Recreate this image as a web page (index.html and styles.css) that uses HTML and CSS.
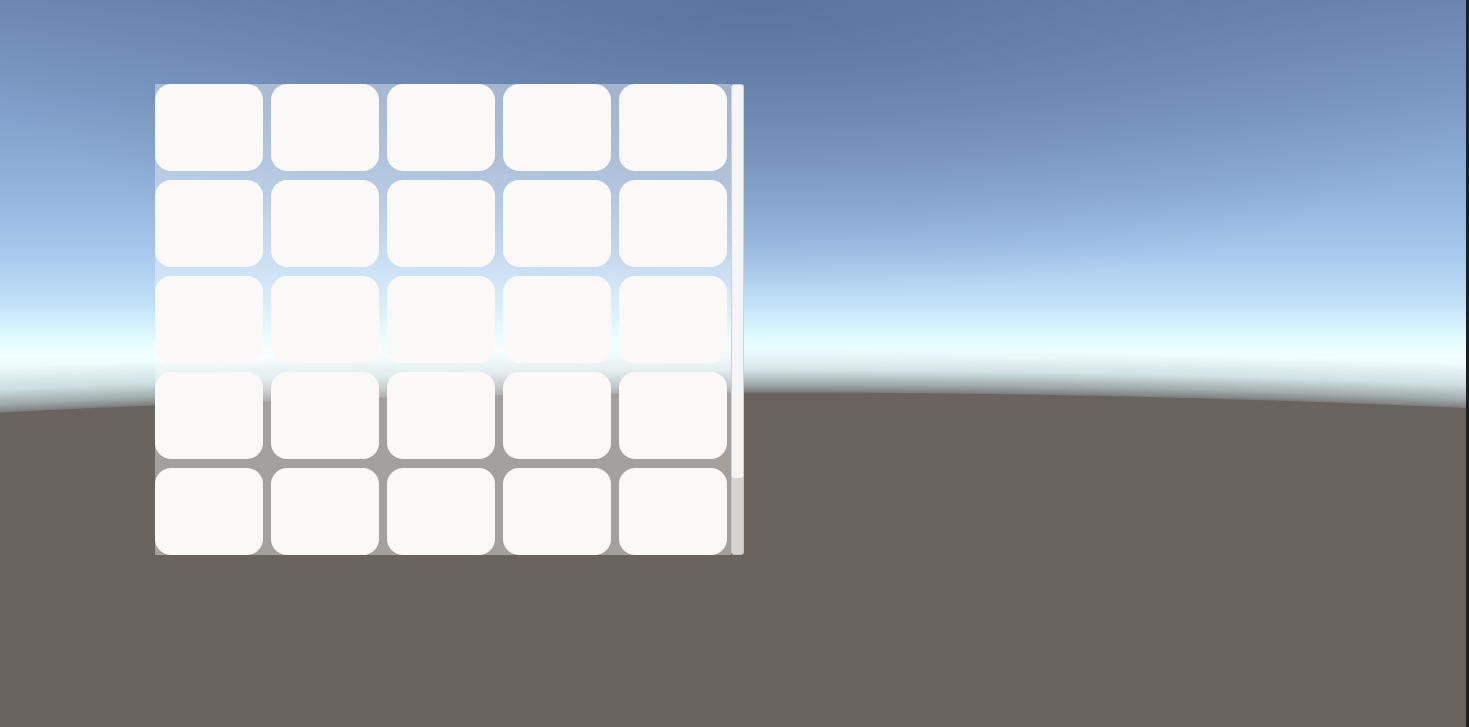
FILE: index.html
```html
<!DOCTYPE html>
<html>
<head>
	<meta charset="utf-8">
	<title>Game</title>
	<link rel="stylesheet" href="styles.css">
</head>
<body>
	<div class="scene">
		<div class="scroll_view">
			<div class="viewport">
				<div class="grid">
					<div class="cell"></div>
					<div class="cell"></div>
					<div class="cell"></div>
					<div class="cell"></div>
					<div class="cell"></div>
					<div class="cell"></div>
					<div class="cell"></div>
					<div class="cell"></div>
					<div class="cell"></div>
					<div class="cell"></div>
					<div class="cell"></div>
					<div class="cell"></div>
					<div class="cell"></div>
					<div class="cell"></div>
					<div class="cell"></div>
					<div class="cell"></div>
					<div class="cell"></div>
					<div class="cell"></div>
					<div class="cell"></div>
					<div class="cell"></div>
					<div class="cell"></div>
					<div class="cell"></div>
					<div class="cell"></div>
					<div class="cell"></div>
					<div class="cell"></div>
				</div>
			</div>
			<div class="scrollbar">
				<div class="handle"></div>
			</div>
		</div>
	</div>
</body>
</html>
```

FILE: styles.css
```css
*{
	margin: 0;
	padding: 0;
}
body{
	background: #1e1e1e;
	overflow: hidden;
}
/* skybox: sky gradient, darker zenith, curved ground with haze */
.scene{
	box-sizing: border-box;
	width: 1469px;
	height: 727px;
	border-right: 3px solid #1e1e1e;
	padding: 84px 0 0 155px;
	background:
		radial-gradient(circle at 780px 15618px, #6a6461 15225px, #7e8080 15226px, #a2acac 15234px, rgba(196,214,216,.6) 15248px, rgba(222,242,242,0) 15270px),
		radial-gradient(ellipse 820px 300px at 760px 0, rgba(86,110,150,.75), rgba(86,110,150,0)),
		linear-gradient(to bottom, #6c89b3 0, #809fca 110px, #93b3db 190px, #a6c6eb 250px, #c2e2f8 305px, #e0fcff 338px, #f2ffff 358px, #e6f6f6 376px, #cfdddd 400px, #6a6461 420px, #6a625d 727px);
}
.scroll_view{
	display: flex;
	width: 589px;
	height: 471px;
}
.viewport{
	width: 576px;
	background: rgba(255,255,255,.39);
	overflow: hidden;
}
.grid{
	display: grid;
	grid-template-columns: repeat(5, 108px);
	grid-auto-rows: 87px;
	column-gap: 8px;
	row-gap: 9px;
}
.cell{
	background: #faf9f8;
	border-radius: 16px;
}
.scrollbar{
	width: 13px;
	box-sizing: border-box;
	background: #d4d4d4;
	border: 1px solid #c2c2c2;
	border-radius: 3px;
}
.handle{
	height: 393px;
	margin: -1px;
	background: #f5f5f5;
	border: 1px solid #cfcfcf;
	border-radius: 3px;
}
```
